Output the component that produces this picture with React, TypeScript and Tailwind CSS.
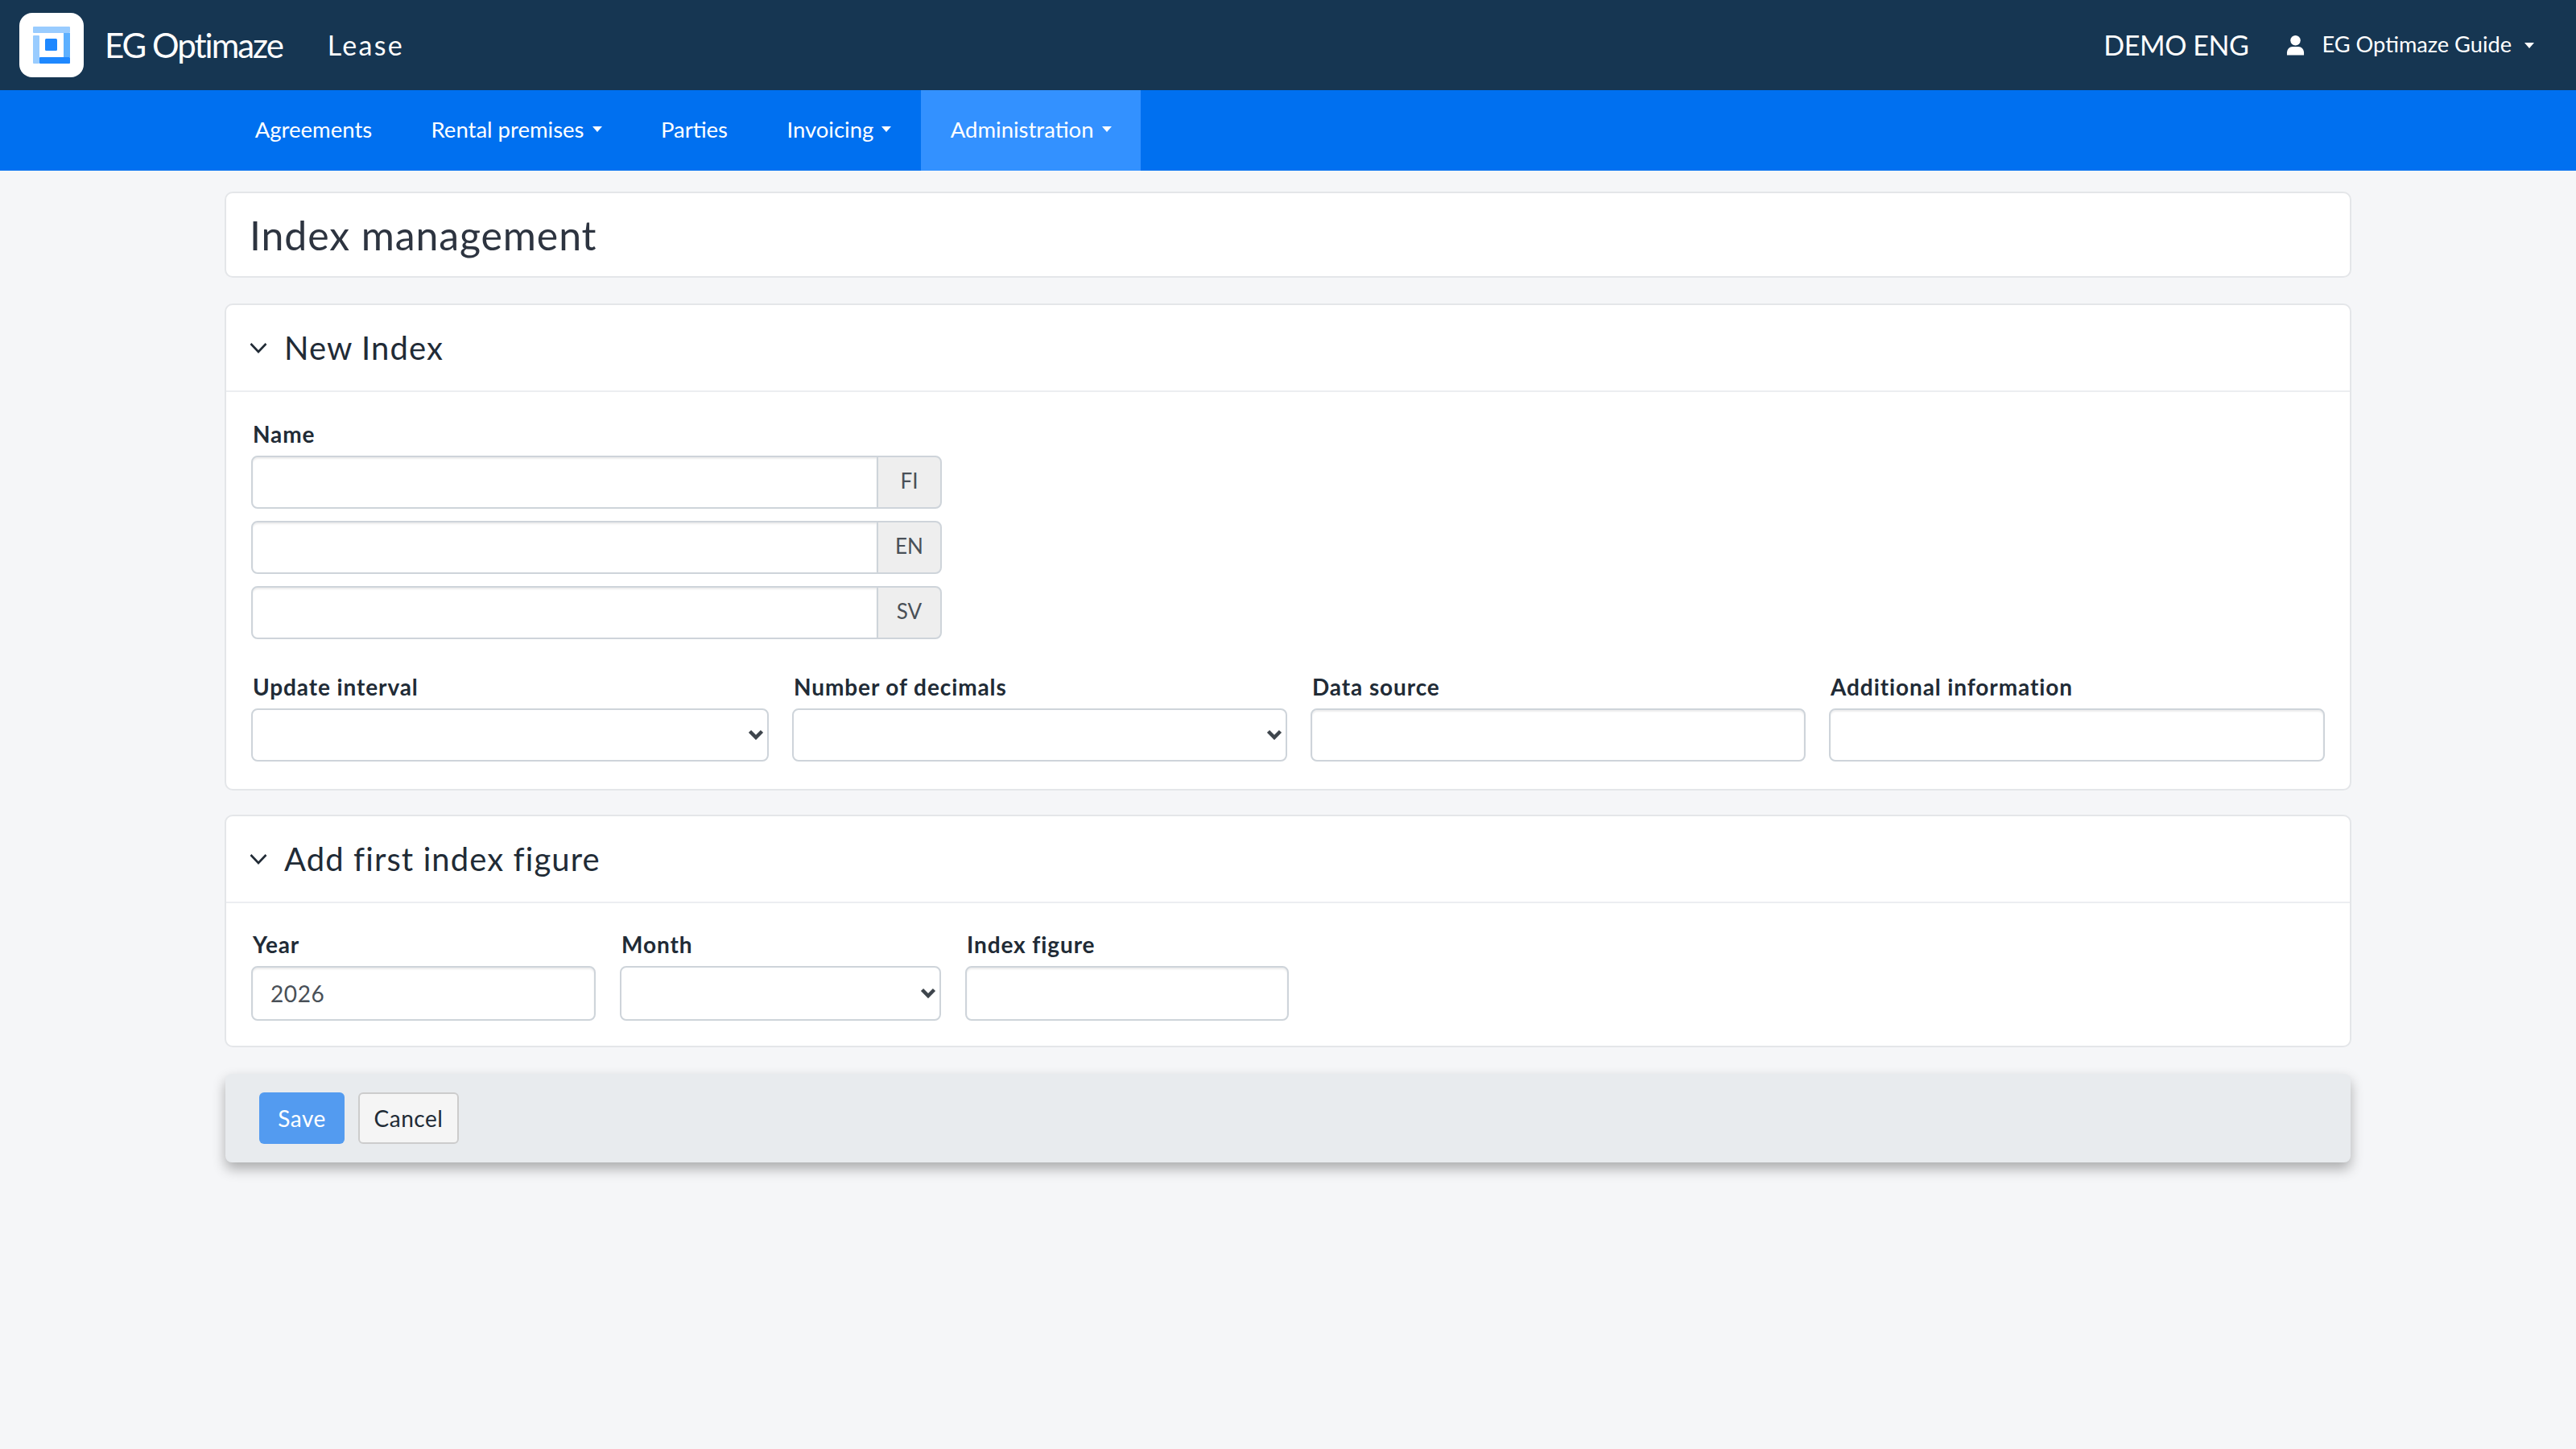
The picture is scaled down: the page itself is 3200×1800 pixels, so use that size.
import React from "react";

const font = { fontFamily: 'Lato, "Noto Sans", sans-serif' };

function Caret({ className = "" }: { className?: string }) {
  return <span className={`inline-block w-0 h-0 border-x-[6px] border-x-transparent border-t-[7px] border-t-white ${className}`} />;
}

function Chevron() {
  return (
    <svg width="24" height="24" viewBox="0 0 24 24" fill="none" stroke="#212b36" strokeWidth="2.6" className="mr-[20px] shrink-0">
      <path d="M2.5 7 12 17l9.5-10" />
    </svg>
  );
}

function Field({ label, gap, children }: { label: string; gap: string; children: React.ReactNode }) {
  return (
    <div className="min-w-0">
      <label className={`block pl-[2px] text-[28px] leading-[42px] font-bold tracking-[0.9px] text-[#212b36] ${gap}`}>{label}</label>
      {children}
    </div>
  );
}

function TextInput({ value = "", tall = false }: { value?: string; tall?: boolean }) {
  return (
    <input
      readOnly
      value={value}
      className={`block w-full px-[22px] text-[28px] tracking-[0.6px] text-[#495057] bg-white border-2 border-[#ced4da] rounded-[8px] shadow-[inset_0_2px_2px_rgba(0,0,0,0.075)] outline-none ${tall ? "h-[68px]" : "h-[66px]"}`}
      style={font}
    />
  );
}

function SelectBox({ tall = false }: { tall?: boolean }) {
  return (
    <div className={`relative bg-white border-2 border-[#ced4da] rounded-[8px] ${tall ? "h-[68px]" : "h-[66px]"}`}>
      <svg width="20" height="14" viewBox="0 0 20 14" className={`absolute right-[4px] ${tall ? "top-[25px]" : "top-[24px]"}`} fill="none" stroke="#3e454c" strokeWidth="4.5">
        <path d="M2.5 2.5 10 10l7.5-7.5" />
      </svg>
    </div>
  );
}

function LangInput({ lang }: { lang: string }) {
  return (
    <div className="flex h-[66px] w-[858px]">
      <input readOnly className="flex-1 min-w-0 bg-white border-2 border-[#ced4da] rounded-l-[8px] shadow-[inset_0_2px_2px_rgba(0,0,0,0.075)] outline-none" />
      <div className="w-[81px] -ml-[2px] pb-[3px] flex items-center justify-center bg-[#eeeeee] border-2 border-[#ced4da] rounded-r-[8px] text-[26px] text-[#495057]">{lang}</div>
    </div>
  );
}

function SectionHead({ title }: { title: string }) {
  return (
    <div className="h-[108px] flex items-center pl-[28px] border-b-2 border-[#eceef1]">
      <Chevron />
      <h2 className="text-[40px] font-normal tracking-[1.1px] text-[#212b36]">{title}</h2>
    </div>
  );
}

export default function App() {
  const navItems: [string, boolean, boolean][] = [
    ["Agreements", false, false],
    ["Rental premises", true, false],
    ["Parties", false, false],
    ["Invoicing", true, false],
    ["Administration", true, true],
  ];
  return (
    <div className="w-[3200px] h-[1800px] bg-[#f5f6f8] overflow-hidden" style={font}>
      <header className="h-[112px] bg-[#163652] flex items-center text-white">
        <div className="ml-[24px] w-[80px] h-[80px] bg-white rounded-[16px] flex items-center justify-center">
          <svg width="46" height="46" viewBox="0 0 46 46">
            <rect x="0" y="0" width="46" height="8" rx="1" fill="#99ccff" />
            <rect x="0" y="11" width="8" height="35" rx="1" fill="#99ccff" />
            <rect x="38" y="8" width="8" height="30" fill="#5cb0ff" />
            <rect x="8" y="38" width="38" height="8" rx="1" fill="#1e88ff" />
            <rect x="15" y="15" width="15" height="15" rx="1.5" fill="#1e88ff" />
          </svg>
        </div>
        <span className="ml-[26px] text-[42px] tracking-[-2px]">EG Optimaze</span>
        <span className="ml-[56px] text-[34px] tracking-[2.3px] -mt-[2px]">Lease</span>
        <span className="ml-auto text-[34px] tracking-[-0.4px] -mt-[1px]">DEMO ENG</span>
        <svg width="23" height="26" viewBox="0 0 24 26" className="ml-[47px] -mt-[1px]" fill="white">
          <circle cx="12" cy="7" r="6.5" />
          <path d="M1 26v-3c0-5 3.5-8 7-8h8c3.5 0 7 3 7 8v3z" />
        </svg>
        <span className="ml-[21px] text-[27.2px] -mt-[2px]">EG Optimaze Guide</span>
        <Caret className="ml-[16px] mr-[52px]" />
      </header>
      <nav className="h-[100px] bg-[#0070f0] flex pl-[280px] text-white text-[27.5px]">
        {navItems.map(([label, caret, active]) => (
          <div key={label} className={`h-full flex items-center pb-[3px] px-[36.7px] ${active ? "bg-[#3391ff]" : ""}`}>
            {label}
            {caret && <Caret className="ml-[10px]" />}
          </div>
        ))}
      </nav>
      <main className="w-[2642px] ml-[279px] pt-[26px] flex flex-col">
        <div className="h-[107px] flex items-center pl-[29px] pt-[2px] bg-white border-2 border-[#e4e6e9] rounded-[10px]">
          <h1 className="text-[50px] font-normal tracking-[0.9px] text-[#2d3440]">Index management</h1>
        </div>
        <section className="mt-[32px] h-[605px] bg-white border-2 border-[#e4e6e9] rounded-[10px]">
          <SectionHead title="New Index" />
          <div className="px-[31px] pt-[31px]">
            <Field label="Name" gap="mb-[6px]">
              <div className="flex flex-col gap-[15px]">
                <LangInput lang="FI" />
                <LangInput lang="EN" />
                <LangInput lang="SV" />
              </div>
            </Field>
            <div className="mt-[38px] grid grid-cols-[643px_615px_615px_616px] gap-x-[29px]">
              <Field label="Update interval" gap="mb-[6px]"><SelectBox /></Field>
              <Field label="Number of decimals" gap="mb-[6px]"><SelectBox /></Field>
              <Field label="Data source" gap="mb-[6px]"><TextInput /></Field>
              <Field label="Additional information" gap="mb-[6px]"><TextInput /></Field>
            </div>
          </div>
        </section>
        <section className="mt-[30px] h-[289px] bg-white border-2 border-[#e4e6e9] rounded-[10px]">
          <SectionHead title="Add first index figure" />
          <div className="px-[31px] pt-[30px] grid grid-cols-[428px_399px_402px] gap-x-[30px]">
            <Field label="Year" gap="mb-[6px]"><TextInput value="2026" tall /></Field>
            <Field label="Month" gap="mb-[6px]"><SelectBox tall /></Field>
            <Field label="Index figure" gap="mb-[6px]"><TextInput tall /></Field>
          </div>
        </section>
        <div className="mt-[33px] mx-[1px] h-[110px] flex items-center gap-[17px] pl-[42px] bg-[#e8ebee] rounded-[8px] shadow-[0_8px_16px_rgba(0,0,0,0.3)]">
          <button className="h-[64px] w-[106px] rounded-[6px] bg-[#539bf0] text-white text-[28px] tracking-[0.5px]">Save</button>
          <button className="h-[64px] w-[125px] rounded-[6px] bg-[#f5f5f5] border-2 border-[#cccccc] text-[#212b36] text-[28px] tracking-[0.5px]">Cancel</button>
        </div>
      </main>
    </div>
  );
}
